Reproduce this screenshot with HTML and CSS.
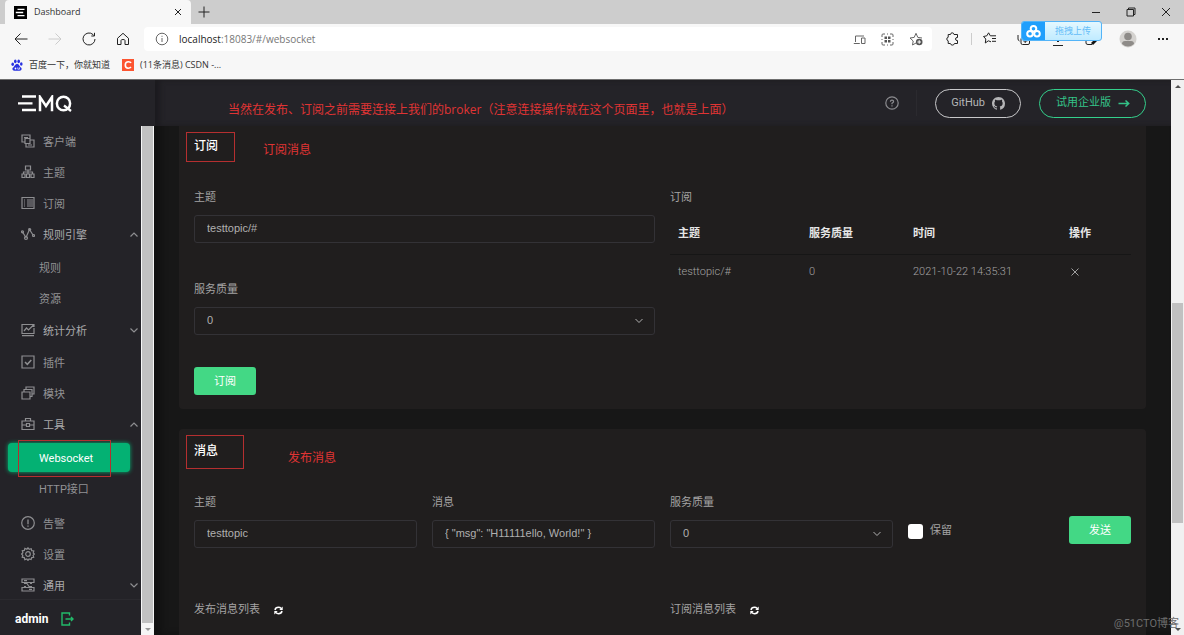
FILE: index.html
```html
<!DOCTYPE html>
<html lang="zh-CN">
<head>
<meta charset="utf-8">
<title>Dashboard</title>
<link rel="stylesheet" href="styles.css">
</head>
<body>
<div class="window">
  <header class="browser">
    <div class="tabs">
      <div class="tab">
        <svg class="favicon" viewBox="0 0 13 13"><rect width="13" height="13" fill="#000"/><path d="M3.5 3.4h7M1.8 6.5h7.4M3.5 9.6h7" stroke="#fff" stroke-width="1.4"/></svg>
        <span class="tab-title">Dashboard</span>
        <button class="bare" aria-label="关闭标签页"><svg width="8" height="8" viewBox="0 0 8 8"><path d="M1 1l6 6M7 1l-6 6" class="dark"/></svg></button>
      </div>
      <button class="bare new-tab" aria-label="新标签页"><svg width="12" height="12" viewBox="0 0 12 12"><path d="M6 .5v11M.5 6h11" class="dark"/></svg></button>
      <div class="window-buttons">
        <button class="bare" aria-label="最小化"><svg width="10" height="10" viewBox="0 0 10 10"><path d="M1 5.5h8" class="dark"/></svg></button>
        <button class="bare" aria-label="还原"><svg width="10" height="10" viewBox="0 0 10 10"><path d="M1 2.5h6.5V9H1zM2.5 2.5V1H9v6.5H7.5" class="dark"/></svg></button>
        <button class="bare" aria-label="关闭"><svg width="10" height="10" viewBox="0 0 10 10"><path d="M1 1l8 8M9 1L1 9" class="dark"/></svg></button>
      </div>
    </div>
    <div class="toolbar">
      <div class="nav-buttons">
        <button class="bare" aria-label="后退"><svg width="14" height="14" viewBox="0 0 14 14"><path d="M13.5 7H1M6.5 1.5L1 7l5.500 5.500" class="dark"/></svg></button>
        <button class="bare" aria-label="前进"><svg width="14" height="14" viewBox="0 0 14 14"><path d="M.5 7H13M7.500 1.500L13 7l-5.500 5.500" class="faint"/></svg></button>
        <button class="bare" aria-label="刷新"><svg width="14" height="14" viewBox="0 0 14 14"><path d="M13 7a6 6 0 1 1-2-4.500L12.500 4M12.500 .8V4H9.300" class="dark"/></svg></button>
        <button class="bare" aria-label="主页"><svg width="14" height="14" viewBox="0 0 14 14"><path d="M1.500 6.300L7 1.300l5.500 5V12.500H9V8.500Q9 7.500 7 7.500T5 8.500v4H1.500z" class="dark"/></svg></button>
      </div>
      <div class="address">
        <svg width="14" height="14" viewBox="0 0 14 14"><circle cx="7" cy="7" r="5.800" class="mid"/><path d="M7 6v4M7 3.800v1" class="mid"/></svg>
        <span class="url"><b>localhost</b>:18083/#/websocket</span>
        <svg width="13" height="13" viewBox="0 0 13 13"><path d="M2.500 9V3H11M.8 10.500h6M8.500 5H12v5.500H8.500z" class="mid"/></svg>
        <svg width="13" height="13" viewBox="0 0 13 13"><path d="M1 4V2q0-1 1-1h2M9 1h2q1 0 1 1v2M12 9v2q0 1-1 1H9M4 12H2q-1 0-1-1V9M1 6v1M12 6v1M6 1h1M6 12h1" class="mid"/><path d="M3.500 3.500H6V6H3.500zM7 3.500h2.500V6H7zM3.500 7H6v2.500H3.500zM7 7h2.500v2.500H7z" fill="#555"/></svg>
        <svg width="14" height="14" viewBox="0 0 14 14"><path d="M7 11l-3.500 2 .7-4L1 6l4.200-.6L7 1.300l1.800 4.100L13 6" class="mid"/><circle cx="10.200" cy="10" r="3.300" fill="#555"/><path d="M10.200 8.200v3.600M8.400 10H12" stroke="#fff" fill="none"/></svg>
      </div>
      <div class="extensions">
        <svg width="14" height="14" viewBox="0 0 14 14"><path d="M4.500 2.500Q4.700.8 6.200.8T8 2.500h3.500V5.500Q9.500 5.300 9.500 7t2 1.600V11.500H8.400q-.3 1.600-2 1.600t-2-1.600H2.200V8.800Q.8 8.500.8 7t1.400-1.700V2.500z" class="dark"/></svg>
        <i class="separator"></i>
        <svg width="14" height="14" viewBox="0 0 14 14"><path d="M8 9.800L5.300 8.800 2.300 11l.5-4L.5 4.500l3.300-.7L5.600.8l1.700 3H13M9 6.500h4M9 9.300h4" class="dark"/></svg>
        <svg width="14" height="14" viewBox="0 0 14 14"><path d="M2.500 9Q1 8.500 1 7V3M5 5.500h6q1.500 0 1.500 1.500v4q0 1.500-1.500 1.500H5.500Q4 12.500 4 11V6.500M8.200 7v4M6.300 9h4" class="dark"/></svg>
        <svg width="14" height="14" viewBox="0 0 14 14"><path d="M7 1v9M4 7l3 3 3-3M2 13.500h10" class="dark"/></svg>
        <svg width="14" height="14" viewBox="0 0 14 14"><path d="M1 7v4q0 1.500 2 1.500h4" class="dark"/><path d="M6 11l6-6 1 3-5 5z" fill="#111"/></svg>
        <svg width="18" height="18" viewBox="0 0 18 18"><circle cx="9" cy="9" r="8.500" fill="#d4d2cf"/><circle cx="9" cy="6.500" r="3.800" fill="#8e8b88"/><path d="M3 14q0-3 3-3h6q3 0 3 3-6 5-12 0z" fill="#8e8b88"/></svg>
        <svg width="12" height="12" viewBox="0 0 12 12"><path d="M1 5h2v2H1zM5 5h2v2H5zM9 5h2v2H9z" fill="#222"/></svg>
      </div>
    </div>
    <div class="bookmarks">
      <a href="#baidu"><svg width="12" height="12" viewBox="0 0 12 12"><g fill="#2932e1"><ellipse cx="1.700" cy="5.300" rx="1.300" ry="1.700"/><ellipse cx="4.300" cy="2.300" rx="1.300" ry="1.900"/><ellipse cx="7.700" cy="2.300" rx="1.300" ry="1.900"/><ellipse cx="10.300" cy="5" rx="1.300" ry="1.700"/><path d="M6 4.800q1.500 0 2.500 2t2 2.300q.5 2.600-2 2.600H3.500q-2.500 0-2-2.600Q2.500 8.500 3.500 6.800T6 4.800z"/></g><circle cx="4.500" cy="9.500" r=".9" fill="#fff"/><path d="M6.800 8.400v1.800h1.700V8.400" stroke="#fff" stroke-width=".7" fill="none"/></svg>百度一下，你就知道</a>
      <a href="#csdn"><svg width="12" height="12" viewBox="0 0 12 12"><rect width="12" height="12" fill="#fc5531"/><path d="M9 4Q8.500 2.800 6.500 2.800 3.300 2.800 3.300 6t2.900 3.200Q8 9.200 9 8" stroke="#fff" stroke-width="1.600" fill="none"/></svg>(11条消息) CSDN -...</a>
    </div>
    <button class="drop-upload">
      <span class="drop-logo"><svg width="15" height="13" viewBox="0 0 15 13"><g fill="none" stroke="#fff" stroke-width="2"><circle cx="7.500" cy="3.800" r="2.800"/><circle cx="4" cy="8.800" r="2.800"/><circle cx="11" cy="8.800" r="2.800"/></g></svg></span>
      <span class="drop-text">拖拽上传</span>
    </button>
  </header>

  <div class="app">
    <aside class="sidebar">
      <div class="logo">
        <svg width="55" height="17" viewBox="0 0 55 17"><path d="M4 1.500h14M0 8.300h14.500M4 15h14" stroke="#fff" stroke-width="2.300" fill="none"/><path d="M22 16.200V2l6 9 6-9v14.200" stroke="#fff" stroke-width="2.500" fill="none"/><ellipse cx="45.500" cy="8.500" rx="6.600" ry="6.800" stroke="#fff" stroke-width="2.500" fill="none"/><path d="M46 10.500l7 5.500" stroke="#fff" stroke-width="2.300"/></svg>
      </div>
      <div class="sidebar-body">
        <div class="sidebar-column">
          <nav class="menu">
            <a class="item" href="#clients"><svg viewBox="0 0 14 14"><path d="M4 8H1V1h8v3M3 3.500h4M4 4.500h5v5H4zM9.500 6H13v7H5V10M7 11h4"/></svg>客户端</a>
            <a class="item" href="#topics"><svg viewBox="0 0 14 14"><path d="M4.500 1h5v4h-5zM7 5v4M2.500 9V7h9v2M1 9h3v3.500H1zM5.500 9h3v3.500h-3zM10 9h3v3.500h-3z"/></svg>主题</a>
            <a class="item" href="#subscriptions"><svg viewBox="0 0 14 14"><path d="M1 1.500h12v11H1zM3 4h1M6 4h6M3 6h1M6 6h6M3 8h1M6 8h6M3 10h1M6 10h6M1 12.500h12"/></svg>订阅</a>
            <a class="item parent" href="#engine"><svg viewBox="0 0 14 14"><path d="M1.500 5L5 10.500 8.500 2.500 12 8"/><circle cx="1.500" cy="4.800" r="1"/><circle cx="5" cy="11" r="1.500"/><circle cx="8.700" cy="2.500" r="1"/><circle cx="12.500" cy="8.500" r="1"/></svg>规则引擎<svg class="caret" viewBox="0 0 8 5"><path d="M.5 4.500L4 1l3.500 3.500"/></svg></a>
            <div class="submenu">
              <a class="item" href="#rules">规则</a>
              <a class="item" href="#resources">资源</a>
            </div>
            <a class="item parent" href="#analysis"><svg viewBox="0 0 14 14"><path d="M10 1.500H1v9h12V5M3 8l2.500-3 2 2L12.500 2M10 1.500h3V4M1 12.700h12"/></svg>统计分析<svg class="caret" viewBox="0 0 8 5"><path d="M.5 .5L4 4 7.500 .5"/></svg></a>
            <a class="item after-closed" href="#plugins"><svg viewBox="0 0 14 14"><path d="M1 1h12v12H1z"/><path d="M4 7l2.300 2.300L10.300 5" stroke-width="1.500"/></svg>插件</a>
            <a class="item" href="#modules"><svg viewBox="0 0 14 14"><path d="M1 6h8v7H1zM3 6V3.500h8v7H9M5 3.500V1h8v7h-2"/></svg>模块</a>
            <a class="item parent" href="#tools"><svg viewBox="0 0 14 14"><path d="M1 4h12v8.500H1zM4.500 4V1.500h5V4M1 8h4.500M8.500 8H13M5.500 6.500h3v3h-3z"/></svg>工具<svg class="caret" viewBox="0 0 8 5"><path d="M.5 4.500L4 1l3.500 3.500"/></svg></a>
            <div class="submenu">
              <a class="item active" href="#websocket">Websocket</a>
              <a class="item" href="#http">HTTP接口</a>
            </div>
            <a class="item section" href="#alarms"><svg viewBox="0 0 14 14"><circle cx="7" cy="7" r="6.300"/><path d="M7 3.500v4.800M7 9.500v1.200" stroke-width="1.300"/></svg>告警</a>
            <a class="item" href="#settings"><svg viewBox="0 0 14 14"><path d="M7 .8l1.200 1.600 2-.7.500 2 2.100.3-.6 2L13.400 7l-1.300 1.300.6 2-2 .3-.6 2-2-.6L7 13.400l-1.200-1.500-2 .7-.5-2-2.100-.4.6-1.900L.6 7l1.300-1.200-.6-2 2-.4.600-2 2 .8z"/><circle cx="7" cy="7" r="2.300"/></svg>设置</a>
            <a class="item parent" href="#general"><svg viewBox="0 0 14 14"><path d="M1 1h12v3.500H1zM1 9.500h12V13H1zM3 5.500h3l2 3h3M3 8.500h2M9 5.500h2M3 2.700h3M8 11.300h3"/></svg>通用<svg class="caret" viewBox="0 0 8 5"><path d="M.5 .5L4 4 7.500 .5"/></svg></a>
          </nav>
          <div class="user">
            <strong>admin</strong>
            <button class="bare" aria-label="退出"><svg width="13" height="14" viewBox="0 0 13 14"><path d="M8.500 3.500V1H1v12h7.500v-2.500M4.500 7H12M10 5l2 2-2 2" fill="none" stroke="#22bb6a" stroke-width="1.400"/></svg></button>
          </div>
        </div>
        <div class="side-scroll"><i class="side-thumb"></i><i class="arrow-down muted"></i></div>
      </div>
      <i class="mark mark-websocket"></i>
    </aside>

    <main class="main">
      <header class="topbar">
        <button class="bare help" aria-label="帮助"><svg width="14" height="14" viewBox="0 0 14 14"><circle cx="7" cy="7" r="6.200" fill="none" stroke="#8b8b8f" stroke-width="1.200"/><path d="M5.400 5.700Q5.400 4.200 7 4.200t1.600 1.400Q8.600 6.500 7 7.300V8.200M7 9.200v1.200" fill="none" stroke="#8b8b8f" stroke-width="1.200"/></svg></button>
        <i class="divider"></i>
        <a class="pill" href="#github">GitHub
          <svg width="13" height="13" viewBox="0 0 16 16"><path fill="#b5b5b7" d="M8 0C3.580 0 0 3.580 0 8c0 3.540 2.290 6.530 5.470 7.590.4.070.55-.17.55-.38 0-.19-.01-.82-.01-1.490-2.010.37-2.530-.49-2.690-.94-.09-.23-.48-.94-.82-1.130-.28-.15-.68-.52-.01-.53.63-.01 1.080.58 1.230.82.72 1.210 1.870.87 2.330.66.07-.52.28-.87.51-1.070-1.780-.2-3.640-.89-3.640-3.950 0-.87.31-1.590.82-2.150-.08-.2-.36-1.020.08-2.120 0 0 .67-.21 2.200.82a7.600 7.600 0 0 1 4 0c1.530-1.040 2.200-.82 2.200-.82.44 1.100.16 1.920.08 2.120.51.56.82 1.270.82 2.150 0 3.070-1.870 3.750-3.650 3.950.29.25.54.73.54 1.480 0 1.070-.01 1.930-.01 2.200 0 .21.15.46.55.38A8.010 8.010 0 0 0 16 8c0-4.420-3.580-8-8-8z"/></svg></a>
        <a class="pill green" href="#enterprise">试用企业版
          <svg width="12" height="9" viewBox="0 0 12 9"><path d="M.5 4.500h10M7.500 1.500l3.200 3-3.200 3" fill="none" stroke="#34c388" stroke-width="1.500"/></svg></a>
        <p class="note note-header">当然在发布、订阅之前需要连接上我们的broker（注意连接操作就在这个页面里，也就是上面）</p>
      </header>

      <div class="content">
        <section class="card first">
          <h2>订阅</h2>
          <div class="halves">
            <form class="stack">
              <label for="sub-topic">主题</label>
              <input id="sub-topic" class="field" type="text" value="testtopic/#">
              <label class="next" for="sub-qos">服务质量</label>
              <select id="sub-qos" class="field"><option>0</option></select>
              <button class="primary subscribe" type="button">订阅</button>
            </form>
            <div class="stack">
              <span class="caption">订阅</span>
              <table>
                <colgroup><col class="c-topic"><col class="c-qos"><col class="c-time"><col></colgroup>
                <thead><tr><th>主题</th><th>服务质量</th><th>时间</th><th>操作</th></tr></thead>
                <tbody><tr><td>testtopic/#</td><td>0</td><td>2021-10-22 14:35:31</td><td><button class="bare remove" aria-label="取消订阅"><svg width="8" height="8" viewBox="0 0 8 8"><path d="M.5 .5l7 7M7.500 .5l-7 7" fill="none" stroke="#a0a0a0"/></svg></button></td></tr></tbody>
              </table>
            </div>
          </div>
          <i class="mark mark-subscribe"></i>
          <p class="note note-subscribe">订阅消息</p>
        </section>

        <section class="card second">
          <h2>消息</h2>
          <form class="quarters">
            <div class="stack"><label for="topic">主题</label><input id="topic" class="field" type="text" value="testtopic"></div>
            <div class="stack"><label for="payload">消息</label><input id="payload" class="field" type="text" value='{ "msg": "H11111ello, World!" }'></div>
            <div class="stack"><label for="qos">服务质量</label><select id="qos" class="field"><option>0</option></select></div>
            <div class="send-row">
              <label class="retain"><input type="checkbox">保留</label>
              <button class="primary" type="button">发送</button>
            </div>
          </form>
          <div class="halves lists">
            <div class="list-title">发布消息列表<button class="bare" aria-label="刷新发布消息"><svg width="9" height="9" viewBox="0 0 9 9"><path d="M1 4Q1.500 1.300 4.500 1.300 6 1.300 7.300 2.500M8 5Q7.500 7.700 4.500 7.700 3 7.700 1.700 6.500" fill="none" stroke="#fff" stroke-width="1.500"/><path d="M8.700.5v3.400H5.300zM.3 8.500V5.100h3.400z" fill="#fff"/></svg></button></div>
            <div class="list-title">订阅消息列表<button class="bare" aria-label="刷新订阅消息"><svg width="9" height="9" viewBox="0 0 9 9"><path d="M1 4Q1.500 1.300 4.500 1.300 6 1.300 7.300 2.500M8 5Q7.500 7.700 4.500 7.700 3 7.700 1.700 6.500" fill="none" stroke="#fff" stroke-width="1.500"/><path d="M8.700.5v3.400H5.300zM.3 8.500V5.100h3.400z" fill="#fff"/></svg></button></div>
          </div>
          <i class="mark mark-message"></i>
          <p class="note note-message">发布消息</p>
        </section>
      </div>
    </main>
    <div class="page-scroll"><i class="arrow-up"></i><i class="page-thumb"></i><i class="arrow-down"></i></div>
    <span class="watermark">@51CTO博客</span>
  </div>
</div>
</body>
</html>
```

FILE: styles.css
```css
* { box-sizing: border-box; }
body {
  margin: 0;
  font-family: Roboto, "Noto Sans CJK SC", sans-serif;
  font-size: 11px;
  line-height: 16px;
  color: #a4a3a3;
}
a { color: inherit; text-decoration: none; }
svg { display: block; flex: none; }
.bare { display: block; padding: 0; border: 0; background: none; }
.window { display: flex; flex-direction: column; height: 100vh; overflow: hidden; }

/* Browser frame */
.browser {
  position: relative;
  flex: none;
  background: #f7f7f7;
  border-bottom: 1px solid #6e6e6e;
  font-family: "Open Sans", "Noto Sans CJK SC", sans-serif;
  color: #333;
}
.dark, .mid, .faint { fill: none; stroke: #222; stroke-width: 1; }
.mid { stroke: #666; }
.faint { stroke: #ccc; }
.tabs { display: flex; align-items: center; height: 24px; padding-left: 5px; background: #cdcdcd; }
.tab {
  display: flex;
  align-items: center;
  width: 186px;
  height: 24px;
  padding: 0 9px;
  border-radius: 4px 4px 0 0;
  background: #f7f7f7;
  font-size: 9px;
}
.favicon { width: 13px; height: 13px; }
.tab-title { flex: 1; margin-left: 7px; }
.new-tab { margin-left: 7px; }
.window-buttons { display: flex; gap: 25px; margin-left: auto; padding-right: 13px; }
.toolbar { display: flex; align-items: center; height: 30px; }
.nav-buttons { display: flex; gap: 20px; padding: 0 14px; }
.address {
  display: flex;
  flex: 1;
  align-items: center;
  gap: 15px;
  height: 24px;
  padding: 0 9px 0 11px;
  border-radius: 4px;
  background: #fff;
}
.url { flex: 1; margin-left: -5px; font-size: 10px; color: #777; }
.url b { font-weight: 400; color: #222; }
.extensions { display: flex; align-items: center; gap: 20px; padding: 0 15px 0 14px; }
.separator { width: 1px; height: 12px; margin: 0 -9px; background: #ccc; }
.bookmarks { display: flex; gap: 12px; height: 25px; padding: 0 11px; font-size: 9px; }
.bookmarks a { display: flex; align-items: center; gap: 6px; height: 22px; }
.drop-upload {
  position: absolute;
  top: 21px;
  right: 82px;
  display: flex;
  width: 81px;
  height: 20px;
  padding: 0;
  border: 1px solid #53b4f8;
  border-radius: 3px;
  overflow: hidden;
  background: linear-gradient(#e4f8ff, #c0ebff);
  font: 9px/18px "Noto Sans CJK SC", sans-serif;
  color: #64bdf8;
}
.drop-logo { display: grid; place-items: center; width: 23px; height: 18px; background: #209ffc; }
.drop-text { flex: 1; }

/* Application */
.app { position: relative; display: flex; flex: 1; min-height: 0; background: #171717; }
.sidebar { position: relative; display: flex; flex-direction: column; width: 155px; background: #242328; }
.logo { display: flex; align-items: center; flex: none; height: 46px; padding-left: 18px; }
.sidebar-body { display: flex; flex: 1; min-height: 0; }
.sidebar-column { display: flex; flex-direction: column; flex: 1; }
.menu { flex: 1; min-height: 0; overflow: hidden; color: #929295; }
.item { display: flex; align-items: center; height: 31px; padding: 2px 0 0 21px; }
.item svg { width: 14px; height: 14px; margin: 0 8px 3px 0; fill: none; stroke: #8e8e91; stroke-width: 1.2; }
.item.parent { color: #aaaaac; }
.item .caret { width: 8px; height: 5px; margin: 0 3px 3px auto; }
.submenu { padding: 2px 0 1px; }
.submenu .item { padding-left: 39px; }
.submenu .active {
  height: 29px;
  margin: 1px 11px 1px 8px;
  padding-left: 31px;
  border-radius: 4px;
  background: #04b173;
  box-shadow: 0 0 4px #04b173;
  color: #fff;
}
.after-closed { margin-top: 1px; }
.section { margin-top: 3px; }
.user {
  display: flex;
  align-items: center;
  flex: none;
  gap: 13px;
  height: 36px;
  padding: 2px 15px 0;
  border-top: 1px solid #2b2a2f;
  color: #fff;
  font-size: 12px;
}
.user strong { font-weight: 700; }
.side-scroll { display: flex; flex-direction: column; align-items: center; width: 14px; border-right: 1px solid #111; background: #f5f5f5; }
.side-thumb { flex: 1; width: 11px; background: #c1c1c1; }
.arrow-down, .arrow-up { width: 0; height: 0; border: 3px solid transparent; }
.arrow-down { margin: 5px 0 4px; border-top-color: #505050; border-bottom: 0; }
.arrow-up { margin: 5px 0 0; border-bottom-color: #505050; border-top: 0; }
.muted { border-top-color: #999; }
.main { display: flex; flex-direction: column; flex: 1; min-width: 0; box-shadow: inset 6px 0 6px #111; }
.topbar {
  position: relative;
  display: flex;
  align-items: center;
  justify-content: flex-end;
  flex: none;
  height: 46px;
  padding-right: 25px;
  background: #242328;
  box-shadow: inset 5px 0 5px #1c1b1f;
}
.divider { width: 1px; height: 26px; margin: 0 18px 0 17px; background: #2b2a2f; }
.pill {
  display: flex;
  align-items: center;
  gap: 7px;
  height: 29px;
  padding: 0 15px;
  border: 1px solid #c8c8ca;
  border-radius: 15px;
  color: #b5b5b7;
}
.pill.green { margin-left: 18px; padding: 0 15px 0 16px; border-color: #34d08c; color: #34c388; }
.content { flex: 1; min-height: 0; padding: 0 25px 0 24px; overflow: hidden; }
.card { position: relative; padding: 0 15px; background: #201e1e; }
.first { padding-bottom: 14px; border-radius: 0 0 4px 4px; }
.second { min-height: 260px; margin-top: 20px; padding-top: 2px; border-radius: 4px; }
h2 { margin: 0 0 24px; font-size: 12px; line-height: 40px; font-weight: 500; color: #fff; }
.halves { display: grid; grid-template-columns: 1fr 1fr; gap: 15px; }
.quarters { display: grid; grid-template-columns: repeat(4, 1fr); gap: 15px; }
.stack { display: flex; flex-direction: column; }
.stack label { margin-bottom: 9px; }
.stack .next { margin-top: 39px; }
.field {
  width: 100%;
  height: 28px;
  padding: 0 12px 2px;
  border: 1px solid #333236;
  border-radius: 3px;
  background: transparent;
  font: 11px "Liberation Sans", sans-serif;
  color: #b0b0b0;
}
select.field {
  appearance: none;
  background: url("data:image/svg+xml,%3Csvg xmlns='http://www.w3.org/2000/svg' width='8' height='6'%3E%3Cpath d='M.5 1L4 4.500 7.500 1' fill='none' stroke='%23b0b0b0'/%3E%3C/svg%3E") right 11px center no-repeat;
}
.primary {
  width: 62px;
  height: 28px;
  padding: 0 0 2px;
  border: 0;
  border-radius: 3px;
  background: #43d885;
  font: 11px/16px "Noto Sans CJK SC", sans-serif;
  color: #fff;
}
.subscribe { margin-top: 32px; }
table { width: 100%; margin-top: 8px; border-collapse: collapse; table-layout: fixed; text-align: left; }
th, td { padding: 1px 0 0 8px; }
th { height: 40px; border-bottom: 1px solid #161616; font-weight: 700; color: #e6e6e6; }
td { height: 34px; font-weight: 300; }
.c-topic { width: 131px; }
.c-qos { width: 104px; }
.c-time { width: 156px; }
.remove { margin-left: 2px; }
.send-row { display: flex; align-items: flex-start; justify-content: space-between; padding-top: 21px; }
.retain { display: flex; align-items: center; gap: 7px; height: 30px; }
.retain input { appearance: none; width: 15px; height: 15px; margin: 0; border-radius: 3px; background: #fff; }
.lists { margin-top: 54px; }
.list-title { display: flex; align-items: center; gap: 14px; }

/* Scrollbar of the page */
.page-scroll { display: flex; flex-direction: column; align-items: center; width: 13px; background: #f1f1f1; }
.page-thumb { width: 11px; height: 220px; margin-top: 215px; margin-bottom: auto; background: #c1c1c1; }

/* Red annotations */
.mark { position: absolute; border: 1px solid #b52f30; }
.mark-websocket { top: 360px; left: 18px; width: 93px; height: 37px; }
.mark-subscribe { top: 6px; left: 7px; width: 49px; height: 30px; }
.mark-message { top: 6px; left: 7px; width: 58px; height: 34px; }
.note { position: absolute; margin: 0; font: 12px/16px "Open Sans", "Noto Sans CJK SC", sans-serif; color: #e03434; white-space: nowrap; }
.note-header { top: 22px; left: 73px; }
.note-subscribe { top: 16px; left: 84px; }
.note-message { top: 21px; left: 109px; }
.watermark { position: absolute; right: 5px; bottom: 3px; font-size: 11px; color: #6d6d6d; }
```
